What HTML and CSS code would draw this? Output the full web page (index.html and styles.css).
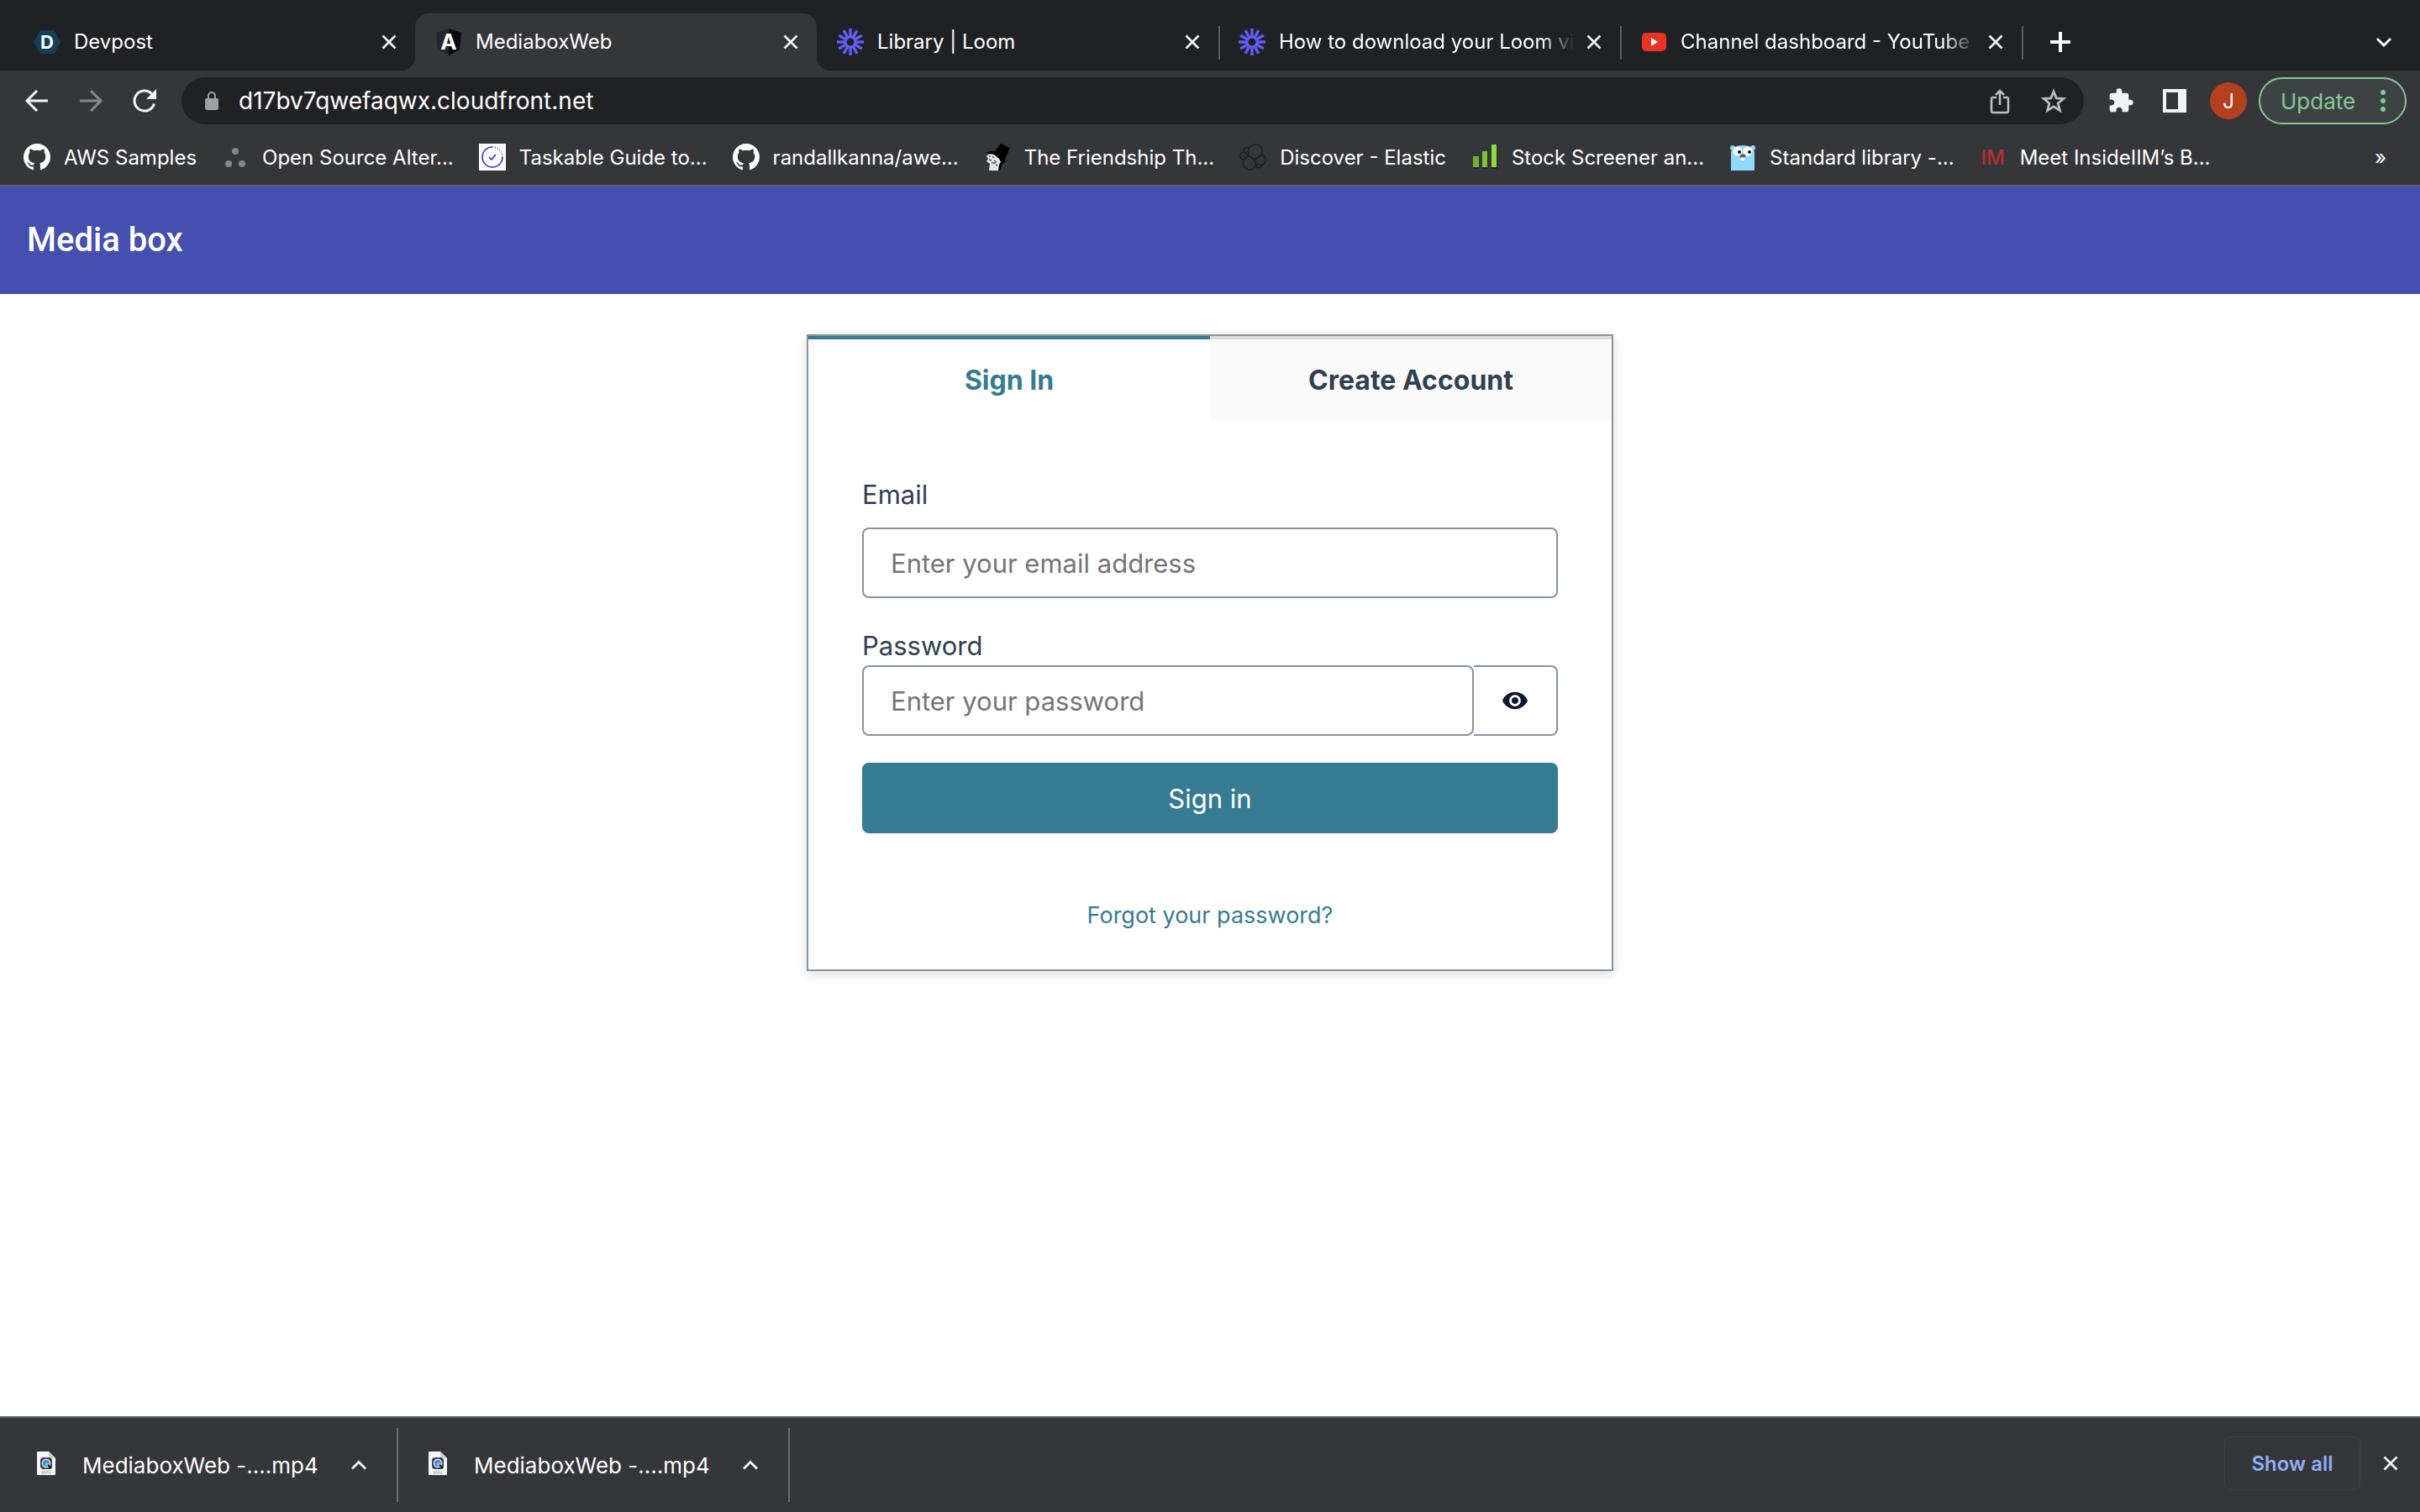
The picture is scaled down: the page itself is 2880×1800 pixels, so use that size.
FILE: index.html
```html
<!DOCTYPE html>
<html lang="en">
<head>
<meta charset="UTF-8">
<title>MediaboxWeb</title>
<link rel="stylesheet" href="styles.css">
</head>
<body>
<!-- shared icons -->
<svg class="sprite" aria-hidden="true">
	<symbol id="i-close" viewBox="0 0 18 18"><path d="M1.5 1.5l15 15M16.5 1.5l-15 15" fill="none" stroke="currentColor" stroke-width="2.6"/></symbol>
	<symbol id="i-up" viewBox="0 0 18 18"><path d="M1 13.500l8-8 8 8" fill="none" stroke="currentColor" stroke-width="2.800"/></symbol>
	<symbol id="i-github" viewBox="0 0 16 16"><path fill="#fff" d="M8 0C3.58 0 0 3.58 0 8c0 3.54 2.290 6.530 5.470 7.590.4.070.550-.170.550-.380 0-.190-.010-.820-.010-1.490-2.010.370-2.530-.490-2.690-.940-.090-.230-.480-.940-.820-1.130-.280-.150-.680-.520-.010-.530.630-.010 1.080.580 1.230.820.720 1.210 1.870.870 2.330.660.070-.520.280-.870.510-1.070-1.780-.200-3.640-.890-3.640-3.950 0-.870.310-1.590.820-2.150-.080-.200-.360-1.020.080-2.120 0 0 .670-.210 2.200.820.640-.180 1.320-.270 2-.270s1.360.090 2 .270c1.530-1.040 2.200-.820 2.200-.820.440 1.100.160 1.920.080 2.120.510.560.820 1.270.820 2.150 0 3.070-1.870 3.750-3.650 3.950.290.250.540.730.540 1.480 0 1.070-.010 1.930-.010 2.200 0 .210.150.460.550.380A8.010 8.010 0 0 0 16 8c0-4.420-3.580-8-8-8z"/></symbol>
	<symbol id="i-loom" viewBox="-16 -16 32 32">
		<g stroke="#625df5" stroke-width="3.4">
			<path d="M0-16V-6M0 6V16M-16 0H-6M6 0H16"/>
			<path d="M0-16V-6M0 6V16M-16 0H-6M6 0H16" transform="rotate(30)"/>
			<path d="M0-16V-6M0 6V16M-16 0H-6M6 0H16" transform="rotate(60)"/>
		</g>
		<circle r="6" fill="none" stroke="#625df5" stroke-width="3"/>
	</symbol>
	<symbol id="i-mp4" viewBox="0 0 22 28">
		<path d="M1 0h13l8 8v19a1 1 0 0 1-1 1H1a1 1 0 0 1-1-1V1a1 1 0 0 1 1-1z" fill="#f6f6f6"/>
		<path d="M14 0l8 8h-8z" fill="#d4d4d4"/>
		<rect x="4" y="7" width="14" height="14" rx="4" fill="#3d4046"/>
		<circle cx="11" cy="14" r="4.600" fill="#3f86e6" stroke="#d9dfe6" stroke-width="1.600"/>
		<circle cx="12" cy="15" r="2" fill="#7fd0f5"/>
		<path d="M13 16l4 4" stroke="#15181c" stroke-width="2"/>
		<text x="11" y="27" text-anchor="middle" font-size="5" fill="#9a9a9a">MP4</text>
	</symbol>
</svg>

<div class="window">
<!-- tabs -->
<div class="tabs">
	<div class="tab">
		<svg class="favicon" viewBox="0 0 32 32"><path d="M8 2h16l8 14-8 14H8L0 16z" fill="#15405a"/><text x="16" y="24" text-anchor="middle" class="logo_letter">D</text></svg>
		<span class="tab_title">Devpost</span>
		<button class="tab_close" aria-label="Close tab"><svg><use href="#i-close"/></svg></button>
	</div>
	<div class="tab active">
		<svg class="favicon" viewBox="0 0 32 32"><path d="M16 0l15 5-2 20-13 7-13-7L1 5z" fill="#23272f"/><path d="M16 0l15 5-2 20-13 7z" fill="#060a12"/><text x="16" y="25" text-anchor="middle" class="logo_letter angular">A</text></svg>
		<span class="tab_title">MediaboxWeb</span>
		<button class="tab_close" aria-label="Close tab"><svg><use href="#i-close"/></svg></button>
	</div>
	<div class="tab separated">
		<svg class="favicon"><use href="#i-loom"/></svg>
		<span class="tab_title">Library | Loom</span>
		<button class="tab_close" aria-label="Close tab"><svg><use href="#i-close"/></svg></button>
	</div>
	<div class="tab separated">
		<svg class="favicon"><use href="#i-loom"/></svg>
		<span class="tab_title faded">How to download your Loom video</span>
		<button class="tab_close" aria-label="Close tab"><svg><use href="#i-close"/></svg></button>
	</div>
	<div class="tab separated">
		<svg class="favicon" viewBox="0 0 32 32"><rect x="2" y="5" width="29" height="22" rx="5" fill="#ea3323"/><path d="M13 11l8 5-8 5z" fill="#fff"/></svg>
		<span class="tab_title faded">Channel dashboard - YouTube Studio</span>
		<button class="tab_close" aria-label="Close tab"><svg><use href="#i-close"/></svg></button>
	</div>
	<button class="new_tab" aria-label="New tab"><svg viewBox="0 0 24 24"><path d="M12 0v24M0 12h24" stroke="#fff" stroke-width="4"/></svg></button>
	<button class="tab_search" aria-label="Search tabs"><svg viewBox="0 0 18 18"><path d="M1 5l8 8 8-8" fill="none" stroke="#fff" stroke-width="2.8"/></svg></button>
</div>

<!-- toolbar -->
<div class="toolbar">
	<button class="nav_button" aria-label="Back"><svg viewBox="0 0 32 32"><path d="M29 16H5M16 4L4 16l12 12" fill="none" stroke="#f1f3f4" stroke-width="3"/></svg></button>
	<button class="nav_button" aria-label="Forward"><svg viewBox="0 0 32 32"><path d="M3 16h24M16 4l12 12-12 12" fill="none" stroke="#86878a" stroke-width="3"/></svg></button>
	<button class="nav_button" aria-label="Reload"><svg viewBox="0 0 32 32"><path d="M27.500 19.500A12 12 0 1 1 24.500 7.500" fill="none" stroke="#f1f3f4" stroke-width="3"/><path d="M30 2v12H18z" fill="#f1f3f4"/></svg></button>
	<div class="address">
		<svg class="lock" viewBox="0 0 16 22"><rect y="8" width="16" height="14" rx="2" fill="#9aa0a6"/><path d="M4 9V5a4 4 0 0 1 8 0v4" fill="none" stroke="#9aa0a6" stroke-width="2"/></svg>
		<input class="url" type="text" aria-label="Address" value="d17bv7qwefaqwx.cloudfront.net">
		<button class="address_button" aria-label="Share"><svg viewBox="0 0 32 32"><path d="M12 12H8a2 2 0 0 0-2 2v14a2 2 0 0 0 2 2h16a2 2 0 0 0 2-2V14a2 2 0 0 0-2-2h-4M16 21V4M11 9l5-5 5 5" fill="none" stroke="#bdbdbd" stroke-width="2.600"/></svg></button>
		<button class="address_button" aria-label="Bookmark"><svg viewBox="0 0 32 32"><path d="M16 5l3.200 7.900 8.600.6-6.600 5.500 2.100 8.400-7.300-4.600-7.300 4.600 2.100-8.400-6.600-5.500 8.600-.6z" fill="none" stroke="#bdbdbd" stroke-width="2.800"/></svg></button>
	</div>
	<button class="tool" aria-label="Extensions"><svg viewBox="0 0 24 24"><path fill="#f1f3f4" d="M20.500 11H19V7c0-1.100-.9-2-2-2h-4V3.500a2.500 2.500 0 0 0-5 0V5H4c-1.100 0-2 .9-2 2v3.800h1.500c1.490 0 2.700 1.210 2.700 2.700s-1.210 2.700-2.700 2.700H2V20c0 1.100.9 2 2 2h3.800v-1.500c0-1.490 1.210-2.700 2.700-2.700s2.700 1.210 2.700 2.700V22H17c1.100 0 2-.9 2-2v-4h1.500a2.500 2.500 0 0 0 0-5z"/></svg></button>
	<button class="tool" aria-label="Side panel"><svg viewBox="0 0 32 32"><path d="M2 2h28v28H2zM6 6v20h14V6z" fill="#f1f3f4" fill-rule="evenodd"/></svg></button>
	<button class="avatar">J</button>
	<button class="update">Update <svg viewBox="0 0 6 28"><circle cx="3" cy="4" r="3"/><circle cx="3" cy="14" r="3"/><circle cx="3" cy="24" r="3"/></svg></button>
</div>

<!-- bookmarks -->
<div class="bookmarks">
	<a href="#" class="bookmark"><svg class="favicon"><use href="#i-github"/></svg>AWS Samples</a>
	<a href="#" class="bookmark"><svg class="favicon" viewBox="0 0 32 32"><g fill="#868686"><circle cx="16" cy="9" r="4"/><circle cx="8" cy="24" r="4"/><circle cx="24" cy="24" r="4"/></g></svg>Open Source Alter...</a>
	<a href="#" class="bookmark"><svg class="favicon" viewBox="0 0 32 32"><path d="M0 0h32v32H0z" fill="#fff"/><path d="M16 4a12 12 0 1 0 12 12" fill="none" stroke="#2b35e8" stroke-width="1.600"/><path d="M16 4a12 12 0 0 1 12 12" fill="none" stroke="#2b35e8" stroke-width="1.600" stroke-dasharray="1 2"/><path d="M12 16l3 3 5-6" fill="none" stroke="#2b35e8" stroke-width="1.600"/></svg>Taskable Guide to...</a>
	<a href="#" class="bookmark"><svg class="favicon"><use href="#i-github"/></svg>randallkanna/awe...</a>
	<a href="#" class="bookmark"><svg class="favicon" viewBox="0 0 32 32"><path d="M20 18l2 5-3 9h-5z" fill="#000"/><path d="M5 13l4-2 8 3 3 8-2 3-1 7H6l1-8-4-3 2-3-2-3z" fill="#e6e6e6"/><path d="M2 11l6-2 5 0L20 0l11 5-6 14 1 2-4 3-4-6-6-5-6-1z" fill="#000"/><path d="M6 15h2M10 15l2 2M6 19l3 1M12 20l3 2M9 23h5M14 25l2 1" stroke="#555" stroke-width="1.400"/></svg>The Friendship Th...</a>
	<a href="#" class="bookmark"><svg class="favicon" viewBox="0 0 32 32"><g fill="none" stroke="#1f2023" stroke-width="1.6"><path d="M11 14C9 6 13 1 19 1s10 6 8 12l-9 6z"/><path d="M18 19l9-6c6 3 5 12-1 12l-6-1zM18 19c4 7-1 12-6 12S3 25 5 19l6-5z"/><path d="M5 19c-6-2-5-9 1-9l5 4zM6 10c-2-4 2-7 5-5M20 24c-1 4 3 6 5 4s2-2 1-3"/></g></svg>Discover - Elastic</a>
	<a href="#" class="bookmark"><svg class="favicon" viewBox="0 0 32 32"><path d="M2 15h7v15H2zM13 9h7v21h-7zM24 1h7v29h-7z" fill="#24262a"/><path d="M2 15h7v13H2z" fill="#72b12f"/><path d="M13 9h6v19h-6z" fill="#7fc436"/><path d="M24 1h6v27h-6z" fill="#8fd943"/></svg>Stock Screener an...</a>
	<a href="#" class="bookmark"><svg class="favicon" viewBox="0 0 32 32"><circle cx="4" cy="5" r="3" fill="#8edaf8"/><circle cx="28" cy="5" r="3" fill="#8edaf8"/><path d="M2 32V10Q4 2 16 2t14 8v22z" fill="#8edaf8"/><circle cx="10" cy="9" r="5.500" fill="#fff"/><circle cx="22" cy="9" r="5.500" fill="#fff"/><circle cx="12" cy="10" r="2" fill="#111"/><circle cx="24" cy="10" r="2" fill="#111"/><path d="M14 15h4v5h-4z" fill="#fff"/><ellipse cx="16" cy="14.500" rx="3.500" ry="2" fill="#6f5a4a"/></svg>Standard library -...</a>
	<a href="#" class="bookmark"><span class="im_logo">IM</span>Meet InsideIIM’s B...</a>
	<button class="more_bookmarks" aria-label="More bookmarks">»</button>
</div>

<!-- page -->
<header class="app_header">Media box</header>
<main class="page">
	<div class="auth_card">
		<div class="auth_tabs">
			<button class="auth_tab selected">Sign In</button>
			<button class="auth_tab">Create Account</button>
		</div>
		<form class="auth_form">
			<div class="field">
				<label for="email">Email</label>
				<input id="email" type="email" class="input_box" placeholder="Enter your email address">
			</div>
			<div class="field field_password">
				<label for="password">Password</label>
				<div class="input_group">
					<input id="password" type="password" class="input_box" placeholder="Enter your password">
					<button type="button" class="show_password" aria-label="Show password"><svg viewBox="1 4 22 16"><path fill="#0d1926" d="M12 4.500C7 4.500 2.730 7.610 1 12c1.730 4.390 6 7.500 11 7.500s9.270-3.110 11-7.500c-1.730-4.390-6-7.500-11-7.500zM12 17c-2.760 0-5-2.240-5-5s2.240-5 5-5 5 2.240 5 5-2.240 5-5 5zm0-8c-1.660 0-3 1.340-3 3s1.340 3 3 3 3-1.340 3-3-1.340-3-3-3z"/></svg></button>
				</div>
			</div>
			<button type="button" class="submit">Sign in</button>
		</form>
		<div class="auth_footer">
			<button class="forgot">Forgot your password?</button>
		</div>
	</div>
</main>

<!-- downloads -->
<footer class="downloads">
	<div class="download">
		<svg class="file_icon"><use href="#i-mp4"/></svg>
		<span class="file_name">MediaboxWeb -....mp4</span>
		<button class="file_menu" aria-label="File menu"><svg><use href="#i-up"/></svg></button>
	</div>
	<div class="download">
		<svg class="file_icon"><use href="#i-mp4"/></svg>
		<span class="file_name">MediaboxWeb -....mp4</span>
		<button class="file_menu" aria-label="File menu"><svg><use href="#i-up"/></svg></button>
	</div>
	<div class="downloads_actions">
		<button class="show_all">Show all</button>
		<button class="close_downloads" aria-label="Close downloads"><svg><use href="#i-close"/></svg></button>
	</div>
</footer>
</div>
</body>
</html>
```

FILE: styles.css
```css
* {
	box-sizing: border-box;
}
body {
	margin: 0;
	font-family: Inter, "Liberation Sans", sans-serif;
	background: #fff;
}
button {
	font-family: inherit;
	background: none;
	border: 0;
	padding: 0;
	margin: 0;
	cursor: pointer;
}
input {
	font-family: inherit;
}
svg {
	display: block;
	flex: none;
}
.sprite {
	position: absolute;
	width: 0;
	height: 0;
}
.window {
	display: flex;
	flex-direction: column;
	min-height: 100vh;
}
.favicon {
	width: 32px;
	height: 32px;
}

/* tabs */
.tabs {
	display: flex;
	align-items: stretch;
	height: 84px;
	padding: 16px 16px 0;
	background: #202124;
	color: #fff;
}
.tab {
	flex: 0 1 478px;
	min-width: 0;
	display: flex;
	align-items: center;
	padding: 0 22px 0 24px;
	position: relative;
	font-size: 24px;
}
.tab.active {
	background: #35363a;
	border-radius: 16px 16px 0 0;
}
/* flared feet of the active tab */
.tab.active::before,
.tab.active::after {
	content: "";
	position: absolute;
	bottom: 0;
	width: 16px;
	height: 16px;
}
.tab.active::before {
	left: -16px;
	background: radial-gradient(circle at 0 0, transparent 16px, #35363a 16px);
}
.tab.active::after {
	right: -16px;
	background: radial-gradient(circle at 100% 0, transparent 16px, #35363a 16px);
}
.tab.separated::after {
	content: "";
	position: absolute;
	right: -2px;
	top: 15px;
	width: 2px;
	height: 40px;
	background: #5b5c60;
}
.tab_title {
	flex: 1;
	margin: 0 14px 0 16px;
	overflow: hidden;
	white-space: nowrap;
	line-height: 32px;
}
.tab_title.faded {
	-webkit-mask-image: linear-gradient(to left, transparent, #000 40px);
	mask-image: linear-gradient(to left, transparent, #000 40px);
}
.tab_close svg,
.tab_search svg,
.file_menu svg,
.close_downloads svg {
	width: 18px;
	height: 18px;
}
.tab_close,
.file_menu,
.close_downloads {
	color: #f1f3f4;
}
.new_tab {
	margin-left: 34px;
}
.new_tab svg {
	width: 24px;
	height: 24px;
}
.tab_search {
	margin-left: auto;
	margin-right: 18px;
}
.logo_letter {
	font-size: 22px;
	font-weight: 700;
	fill: #fff;
}
.logo_letter.angular {
	font-size: 26px;
}

/* toolbar */
.toolbar {
	display: flex;
	align-items: center;
	padding: 8px 16px 8px 28px;
	background: #35363a;
}
.nav_button {
	margin-right: 32px;
}
.nav_button svg,
.address_button svg,
.tool svg {
	width: 32px;
	height: 32px;
}
.address {
	flex: 1;
	display: flex;
	align-items: center;
	height: 56px;
	margin-right: 28px;
	padding: 0 20px 0 28px;
	border-radius: 28px;
	background: #202124;
}
.nav_button + .address {
	margin-left: -4px;
}
.lock {
	width: 16px;
	height: 22px;
}
.url {
	flex: 1;
	margin-left: 24px;
	padding: 0;
	border: 0;
	outline: 0;
	background: none;
	color: #fff;
	font-size: 28px;
}
.address_button {
	margin-left: 32px;
}
.tool {
	margin-right: 32px;
}
.avatar {
	width: 44px;
	height: 44px;
	margin-left: -6px;
	border-radius: 50%;
	background: #b3411f;
	color: #fff;
	font-size: 24px;
}
.update {
	display: flex;
	align-items: center;
	justify-content: space-between;
	width: 176px;
	height: 56px;
	margin-left: 14px;
	padding: 0 23px 0 24px;
	border: 2px solid #8ac796;
	border-radius: 28px;
	background: #3d4344;
	color: #8ac796;
	font-size: 26px;
}
.update svg {
	width: 6px;
	height: 28px;
	fill: #8ac796;
}

/* bookmarks */
.bookmarks {
	display: flex;
	align-items: center;
	gap: 30px;
	height: 66px;
	padding: 0 40px 2px 28px;
	background: #35363a;
	border-bottom: 2px solid #5f6064;
}
.bookmark {
	display: flex;
	align-items: center;
	gap: 16px;
	color: #fff;
	font-size: 24px;
	text-decoration: none;
	white-space: nowrap;
}
.im_logo {
	width: 32px;
	text-align: center;
	color: #b9302c;
	font-weight: 500;
}
.more_bookmarks {
	margin-left: auto;
	color: #fff;
	font-size: 24px;
}

/* page */
.app_header {
	height: 128px;
	padding: 0 32px;
	line-height: 128px;
	background: #444fb0;
	color: #fff;
	font-family: Roboto, sans-serif;
	font-size: 40px;
	font-weight: 500;
}
.page {
	flex: 1;
	padding: 48px 0;
}
.auth_card {
	width: 960px;
	max-width: 100%;
	margin: 0 auto;
	border: 2px solid #8992a0;
	box-shadow: 0 4px 12px rgba(13, 26, 38, 0.15);
	background: #fff;
}
.auth_tabs {
	display: flex;
}
.auth_tab {
	flex: 1;
	height: 100px;
	border-top: 4px solid #dcdcde;
	background: #fafafa;
	color: #304050;
	font-size: 32px;
	font-weight: 700;
}
.auth_tab.selected {
	border-color: #377b92;
	background: #fff;
	color: #377b92;
}
.auth_form {
	display: flex;
	flex-direction: column;
	gap: 32px;
	padding: 64px;
}
.field {
	display: flex;
	flex-direction: column;
	gap: 16px;
	color: #304050;
	font-size: 31px;
}
.field label {
	padding-top: 2px;
	line-height: 46px;
}
.field_password {
	gap: 0;
}
.input_box {
	width: 100%;
	height: 84px;
	padding: 0 32px;
	border: 2px solid #8992a0;
	border-radius: 8px;
	background: #fff;
	color: #304050;
	font-size: 31px;
}
.input_box::placeholder {
	color: #757575;
}
.input_group {
	display: flex;
}
.input_group .input_box {
	flex: 1;
	width: auto;
	min-width: 0;
}
.show_password {
	display: flex;
	align-items: center;
	justify-content: center;
	width: 100px;
	border: 2px solid #8992a0;
	border-left: 0;
	border-radius: 0 8px 8px 0;
}
.show_password svg {
	width: 30px;
	height: 22px;
}
.submit {
	height: 84px;
	border-radius: 8px;
	background: #377b92;
	color: #fff;
	font-size: 31px;
}
.auth_footer {
	padding: 0 32px 32px;
	text-align: center;
}
.forgot {
	height: 66px;
	color: #377b92;
	font-size: 27px;
}

/* downloads */
.downloads {
	display: flex;
	align-items: center;
	height: 114px;
	padding: 0 26px 0 8px;
	background: #35363a;
	border-top: 2px solid #5f6064;
}
.download {
	display: flex;
	align-items: center;
	width: 466px;
	height: 88px;
	padding: 0 36px;
	border-right: 2px solid #6a6b6f;
}
.file_icon {
	width: 22px;
	height: 28px;
	margin-bottom: 4px;
}
.file_name {
	flex: 1;
	margin-left: 32px;
	color: #fff;
	font-size: 26px;
	white-space: nowrap;
}
.downloads_actions {
	display: flex;
	align-items: center;
	gap: 27px;
	margin-left: auto;
	padding-bottom: 4px;
}
.show_all {
	width: 162px;
	height: 64px;
	border: 1px solid #3f4044;
	border-radius: 8px;
	color: #8fb0f5;
	font-size: 24px;
	font-weight: 600;
}
```
